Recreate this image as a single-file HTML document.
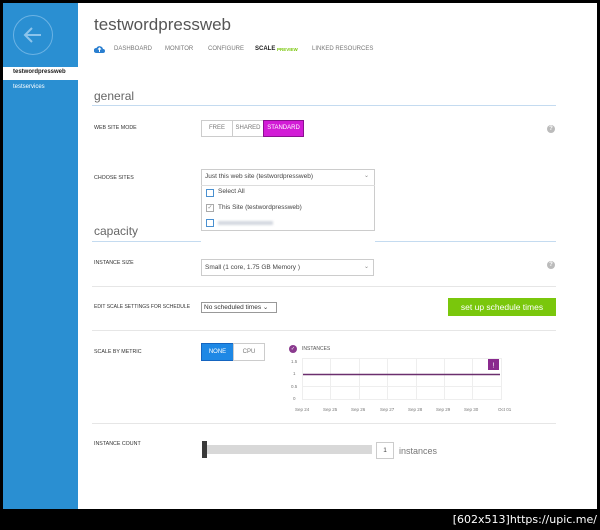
<!DOCTYPE html>
<html><head><meta charset="utf-8"><style>
*{margin:0;padding:0;box-sizing:border-box}
body{width:600px;height:530px;background:#000;position:relative;overflow:hidden;font-family:"Liberation Sans",sans-serif}
.a{position:absolute}
.pg{left:3px;top:3px;width:594px;height:506px;background:#fff}
.sb{left:3px;top:3px;width:75px;height:506px;background:#2a8fd2}
.lbl{font-size:5.3px;color:#333}
.nav{font-size:6px;color:#777;top:46px}
.sec{font-size:12px;color:#666}
.hl{height:1px;background:#c4dbf0;left:92px;width:464px}
.sep{height:1px;background:#e6e6e6;left:92px;width:464px}
.q{width:8px;height:8px;border-radius:50%;background:#bbb;color:#fff;font-size:6px;text-align:center;line-height:8px;font-weight:bold}
.btn{font-size:6px;text-align:center;border:1px solid #ccc;color:#777}
.xl{font-size:4.5px;color:#777;top:407px}
.yl{font-size:4.5px;color:#777;left:291px}
.cb{width:8px;height:8px;border:1px solid #4a90d0}
</style></head><body>
<div class="a pg"></div>
<div class="a sb"></div>
<div class="a" style="left:13px;top:15px;width:40px;height:40px;border:1.5px solid #6cb3e4;border-radius:50%"></div>
<svg class="a" style="left:21px;top:25px" width="24" height="20" viewBox="0 0 24 20"><path d="M20 10H5M11 3L4 10l7 7" stroke="#8cc4ec" stroke-width="2" fill="none"/></svg>
<div class="a" style="left:3px;top:67px;width:75px;height:13px;background:#fff"></div>
<div class="a" style="left:13px;top:69px;font-size:6px;font-weight:bold;color:#222">testwordpressweb</div>
<div class="a" style="left:13px;top:84px;font-size:6px;color:#fff">testservices</div>

<div class="a" style="left:94px;top:15px;font-size:17px;color:#555">testwordpressweb</div>
<svg class="a" style="left:94px;top:45px" width="11" height="8" viewBox="0 0 11 8"><path d="M2 8h7a2 2 0 0 0 0-4A3.5 3.5 0 0 0 2.5 3 2.5 2.5 0 0 0 2 8z" fill="#2a7fd0"/><path d="M5.5 7V3M4 4.5l1.5-1.5 1.5 1.5" stroke="#fff" stroke-width="1" fill="none"/></svg>
<div class="a nav" style="left:114px">DASHBOARD</div>
<div class="a nav" style="left:165px">MONITOR</div>
<div class="a nav" style="left:208px">CONFIGURE</div>
<div class="a nav" style="left:255px;color:#222;font-weight:bold">SCALE</div>
<div class="a nav" style="left:277px;color:#7ac70c;font-size:4.5px;top:47px;font-weight:bold">PREVIEW</div>
<div class="a nav" style="left:312px">LINKED RESOURCES</div>

<div class="a sec" style="left:94px;top:89px">general</div>
<div class="a hl" style="top:105px"></div>
<div class="a lbl" style="left:94px;top:125px">WEB SITE MODE</div>
<div class="a btn" style="left:201px;top:120px;width:32px;height:17px;line-height:15px">FREE</div>
<div class="a btn" style="left:232px;top:120px;width:32px;height:17px;line-height:15px">SHARED</div>
<div class="a btn" style="left:263px;top:120px;width:41px;height:17px;line-height:15px;background:#d21cd6;border-color:#8a1090;color:#fff">STANDARD</div>
<div class="a q" style="left:547px;top:125px">?</div>

<div class="a lbl" style="left:94px;top:175px">CHOOSE SITES</div>
<div class="a" style="left:201px;top:169px;width:174px;height:62px;border:1px solid #ccc;background:#fff"></div>
<div class="a" style="left:201px;top:185px;width:174px;height:1px;background:#ddd"></div>
<div class="a" style="left:205px;top:173px;font-size:6.5px;color:#444">Just this web site (testwordpressweb)</div>
<div class="a" style="left:364px;top:172px;font-size:6px;color:#888">⌄</div>
<div class="a cb" style="left:206px;top:189px"></div>
<div class="a" style="left:218px;top:188px;font-size:6.5px;color:#444">Select All</div>
<div class="a cb" style="left:206px;top:204px;border-color:#aaa;font-size:6px;color:#888;line-height:6px;text-align:center">✓</div>
<div class="a" style="left:218px;top:204px;font-size:6.5px;color:#444">This Site (testwordpressweb)</div>
<div class="a cb" style="left:206px;top:219px"></div>
<div class="a" style="left:218px;top:221px;width:55px;height:4px;background:#d4d8e0;filter:blur(1px)"></div>
<div class="a sec" style="left:94px;top:224px">capacity</div>
<div class="a hl" style="top:241px;left:92px;width:109px"></div>
<div class="a hl" style="top:241px;left:375px;width:181px"></div>

<div class="a lbl" style="left:94px;top:260px">INSTANCE SIZE</div>
<div class="a" style="left:201px;top:259px;width:173px;height:17px;border:1px solid #ccc"></div>
<div class="a" style="left:205px;top:264px;font-size:6.5px;color:#444">Small (1 core, 1.75 GB Memory )</div>
<div class="a" style="left:364px;top:263px;font-size:6px;color:#888">⌄</div>
<div class="a q" style="left:547px;top:261px">?</div>
<div class="a sep" style="top:286px"></div>

<div class="a lbl" style="left:94px;top:304px;font-size:5px">EDIT SCALE SETTINGS FOR SCHEDULE</div>
<div class="a" style="left:201px;top:302px;width:76px;height:11px;border:1px solid #999;font-size:6.5px;color:#333;padding-left:2px;line-height:9px">No scheduled times ⌄</div>
<div class="a" style="left:448px;top:298px;width:108px;height:18px;background:#7ac70c;color:#fff;font-size:8.5px;text-align:center;line-height:18px">set up schedule times</div>
<div class="a sep" style="top:330px"></div>

<div class="a lbl" style="left:94px;top:349px">SCALE BY METRIC</div>
<div class="a btn" style="left:201px;top:343px;width:33px;height:18px;line-height:16px;background:#1e88e5;border-color:#1565c0;color:#fff">NONE</div>
<div class="a btn" style="left:233px;top:343px;width:32px;height:18px;line-height:16px">CPU</div>
<div class="a" style="left:289px;top:345px;width:8px;height:8px;border-radius:50%;background:#8a3a8e;color:#fff;font-size:5px;text-align:center;line-height:8px">✓</div>
<div class="a" style="left:302px;top:346px;font-size:5px;color:#555">INSTANCES</div>
<div class="a yl" style="top:359px">1.5</div>
<div class="a yl" style="top:371px;left:293px">1</div>
<div class="a yl" style="top:384px">0.5</div>
<div class="a yl" style="top:396px;left:293px">0</div>
<svg class="a" style="left:302px;top:358px" width="202" height="44">
<g stroke="#eee" stroke-width="1">
<path d="M0.5 0V42M28.5 0V42M57.5 0V42M85.5 0V42M114.5 0V42M142.5 0V42M170.5 0V42M199.5 0V42M0 0.5H200M0 28.5H200M0 41.5H200"/>
</g>
<path d="M1 16.5H198" stroke="#6b2f6e" stroke-width="1.5"/>
<rect x="186" y="1" width="11" height="11" fill="#8a2a8e"/>
<text x="191.5" y="9.5" fill="#fff" font-size="7" text-anchor="middle" font-family="Liberation Sans">!</text>
</svg>
<div class="a xl" style="left:295px">Sep 24</div>
<div class="a xl" style="left:323px">Sep 25</div>
<div class="a xl" style="left:351px">Sep 26</div>
<div class="a xl" style="left:380px">Sep 27</div>
<div class="a xl" style="left:408px">Sep 28</div>
<div class="a xl" style="left:436px">Sep 29</div>
<div class="a xl" style="left:464px">Sep 30</div>
<div class="a xl" style="left:498px">Oct 01</div>
<div class="a sep" style="top:423px"></div>

<div class="a lbl" style="left:94px;top:441px">INSTANCE COUNT</div>
<div class="a" style="left:207px;top:445px;width:165px;height:9px;background:#d8d8d8"></div>
<div class="a" style="left:202px;top:441px;width:5px;height:17px;background:#3a3a3a"></div>
<div class="a" style="left:376px;top:442px;width:18px;height:17px;border:1px solid #ccc;font-size:6.5px;color:#444;text-align:center;line-height:15px">1</div>
<div class="a" style="left:399px;top:446px;font-size:9px;color:#777">instances</div>

<div class="a" style="right:3px;top:513px;font-size:11px;color:#fff;font-family:'DejaVu Sans',sans-serif">[602x513]https://upic.me/</div>
</body></html>
